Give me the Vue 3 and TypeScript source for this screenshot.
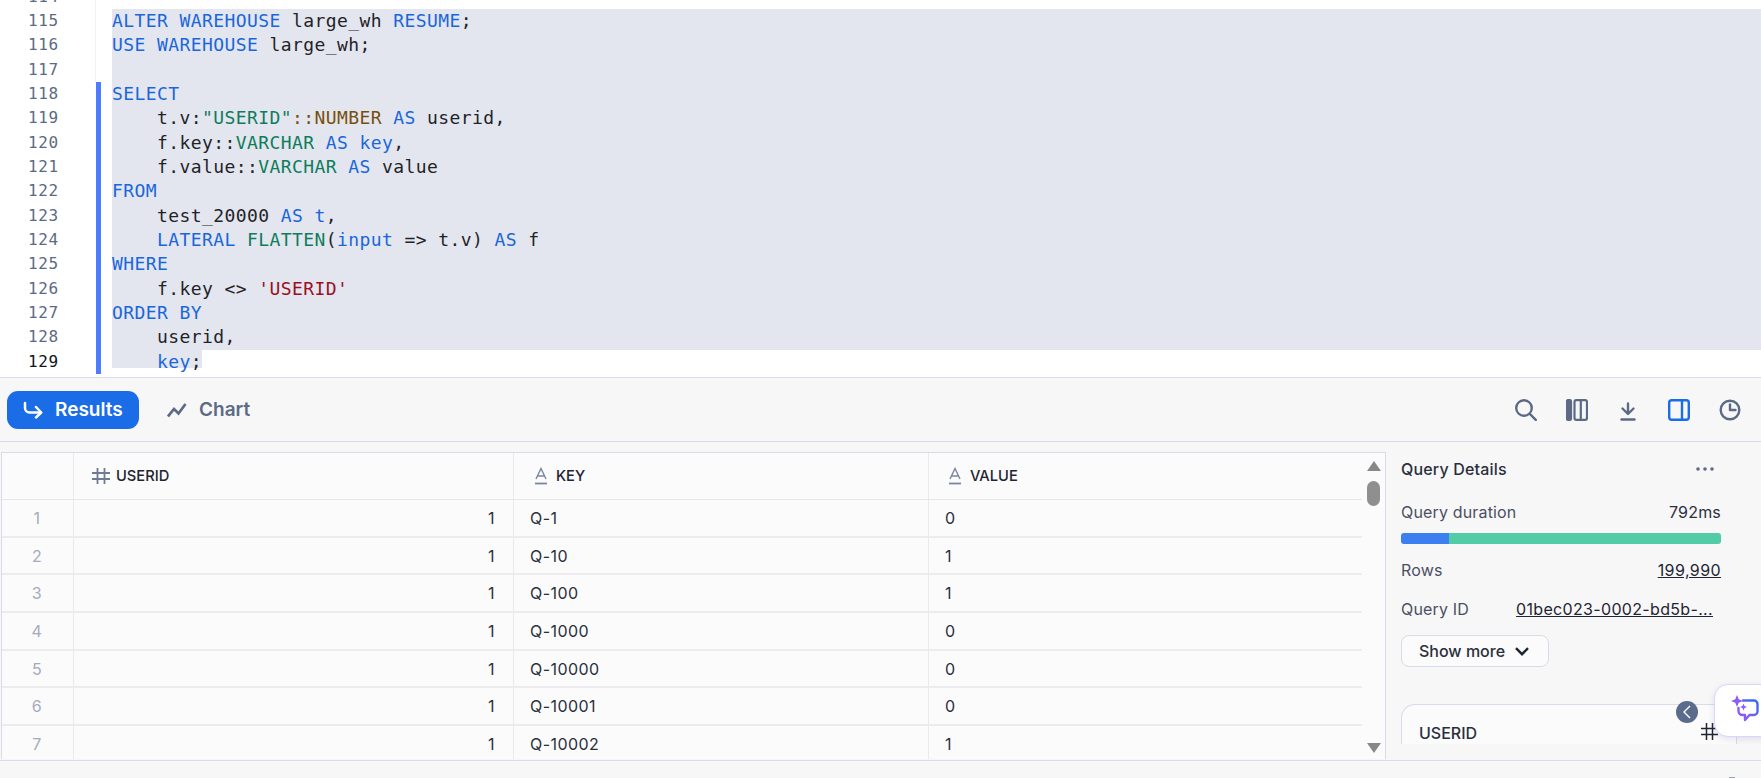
<script setup lang="ts">
type Tok = { t: string; c?: string }
const k = (t: string): Tok => ({ t, c: 'kw' })
const g = (t: string): Tok => ({ t, c: 'fn' })
const p = (t: string): Tok => ({ t })

const lines: { n: number; toks: Tok[] }[] = [
  { n: 114, toks: [] },
  { n: 115, toks: [k('ALTER WAREHOUSE'), p(' large_wh '), k('RESUME'), p(';')] },
  { n: 116, toks: [k('USE WAREHOUSE'), p(' large_wh;')] },
  { n: 117, toks: [] },
  { n: 118, toks: [k('SELECT')] },
  { n: 119, toks: [p('    t.v:'), g('"USERID"'), { t: '::', c: 'op' }, { t: 'NUMBER', c: 'ty' }, p(' '), k('AS'), p(' userid,')] },
  { n: 120, toks: [p('    f.key::'), g('VARCHAR'), p(' '), k('AS'), p(' '), k('key'), p(',')] },
  { n: 121, toks: [p('    f.value::'), g('VARCHAR'), p(' '), k('AS'), p(' value')] },
  { n: 122, toks: [k('FROM')] },
  { n: 123, toks: [p('    test_20000 '), k('AS'), p(' '), k('t'), p(',')] },
  { n: 124, toks: [p('    '), k('LATERAL'), p(' '), g('FLATTEN'), p('('), k('input'), p(' => t.v) '), k('AS'), p(' f')] },
  { n: 125, toks: [k('WHERE')] },
  { n: 126, toks: [p('    f.key <> '), { t: "'USERID'", c: 'str' }] },
  { n: 127, toks: [k('ORDER BY')] },
  { n: 128, toks: [p('    userid,')] },
  { n: 129, toks: [p('    '), k('key'), p(';')] },
]

const rows: [number, string, number][] = [
  [1, 'Q-1', 0],
  [2, 'Q-10', 1],
  [3, 'Q-100', 1],
  [4, 'Q-1000', 0],
  [5, 'Q-10000', 0],
  [6, 'Q-10001', 0],
  [7, 'Q-10002', 1],
]
</script>

<template>
  <div class="page">
    <section class="editor">
      <div class="code">
        <div
          v-for="l in lines"
          :key="l.n"
          class="line"
          :class="{ sel: l.n >= 115 && l.n < 129, last: l.n === 129, changed: l.n >= 118 }"
        >
          <span class="num" :class="{ cur: l.n === 129 }">{{ l.n }}</span>
          <span class="marker"></span>
          <span class="text"><span class="inner"><span v-for="(t, i) in l.toks" :key="i" :class="t.c">{{ t.t }}</span></span></span>
        </div>
      </div>
    </section>

    <div class="toolbar">
      <button class="tab active">
        <svg width="20" height="18" viewBox="0 0 20 18" fill="none" stroke="#fff" stroke-width="2.500" stroke-linecap="round" stroke-linejoin="round"><path d="M2 2v5a4.500 4.500 0 0 0 4.500 4.500H18" /><path d="M13 6l5.200 5.500L13 16.500" /></svg>
        Results
      </button>
      <button class="tab">
        <svg width="20" height="16" viewBox="0 0 20 16" fill="none" stroke="#5d6a85" stroke-width="2.700" stroke-linejoin="miter"><path d="M1 14.500 7 7l4.500 4.500L18.500 2" /></svg>
        Chart
      </button>
      <div class="tools">
        <svg width="22" height="22" viewBox="0 0 22 22" fill="none" stroke="#5d6a85" stroke-width="2.400" stroke-linecap="round"><circle cx="9" cy="9" r="7.800" /><path d="m14.800 14.800 6 6" /></svg>
        <svg width="22" height="22" viewBox="0 0 22 22" fill="none" stroke="#5d6a85" stroke-width="2.200" stroke-linejoin="round"><rect x="1" y="1" width="4" height="20" rx="1.500" fill="#5d6a85" /><rect x="8.500" y="1.200" width="12.500" height="19.600" rx="1.800" /><path d="M14.800 1.200v19.600" /></svg>
        <svg width="22" height="22" viewBox="0 0 22 22" fill="none" stroke="#5d6a85" stroke-width="2.400" stroke-linecap="round" stroke-linejoin="round"><path d="M11 4.500v10M5.500 9.500 11 15l5.500-5.500" /><path d="M4.500 20.500h13" /></svg>
        <svg width="22" height="22" viewBox="0 0 22 22" fill="none" stroke="#1a6ce7" stroke-width="2.400" stroke-linejoin="round"><rect x="1.200" y="1.200" width="19.600" height="19.600" rx="2.500" /><path d="M14 1.200v19.600" /></svg>
        <svg width="22" height="22" viewBox="0 0 22 22" fill="none" stroke="#5d6a85" stroke-width="2.400" stroke-linecap="round" stroke-linejoin="round"><circle cx="11" cy="11" r="9.300" /><path d="M11 5.500V11h5.500" /></svg>
      </div>
    </div>

    <div class="results">
      <div class="table-wrap">
        <div class="grid-scroll">
          <div class="hrow">
            <div class="c c0"></div>
            <div class="c c1 h">
              <svg width="18" height="18" viewBox="0 0 18 18" fill="none" stroke="#6f7a93" stroke-width="1.800"><path d="M5.500 1v16M12.500 1v16M0 6h18M0 12h18" /></svg>
              <span>USERID</span>
            </div>
            <div class="c c2 h">
              <svg class="a" width="14" height="18" viewBox="0 0 14 18" fill="none" stroke="#7a86a0" stroke-width="1.400"><path d="M2 12 7 1.500 12 12M3.500 9h7" /><path d="M1 16.500h12" stroke-width="1.800" /></svg>
              <span>KEY</span>
            </div>
            <div class="c c3 h">
              <svg class="a" width="14" height="18" viewBox="0 0 14 18" fill="none" stroke="#7a86a0" stroke-width="1.400"><path d="M2 12 7 1.500 12 12M3.500 9h7" /><path d="M1 16.500h12" stroke-width="1.800" /></svg>
              <span>VALUE</span>
            </div>
          </div>
          <div v-for="r in rows" :key="r[0]" class="row">
            <div class="c c0 idx">{{ r[0] }}</div>
            <div class="c c1 right">1</div>
            <div class="c c2">{{ r[1] }}</div>
            <div class="c c3">{{ r[2] }}</div>
          </div>
        </div>
        <div class="sbar">
          <span class="arrow up"></span>
          <span class="thumb"></span>
          <span class="arrow down"></span>
        </div>
      </div>

      <aside class="details">
        <div class="d-head">
          <span>Query Details</span>
          <svg width="18" height="4" viewBox="0 0 18 4" fill="#5d6a85"><circle cx="2" cy="2" r="1.800" /><circle cx="9" cy="2" r="1.800" /><circle cx="16" cy="2" r="1.800" /></svg>
        </div>
        <div class="d-row first"><span class="lbl">Query duration</span><span class="val">792ms</span></div>
        <div class="bar"><span class="b1"></span><span class="b2"></span></div>
        <div class="d-row r2"><span class="lbl">Rows</span><a>199,990</a></div>
        <div class="d-row r3"><span class="lbl">Query ID</span><a class="qid">01bec023-0002-bd5b-...</a></div>
        <button class="more">
          Show more
          <svg width="14" height="9" viewBox="0 0 14 9" fill="none" stroke="#1f2433" stroke-width="2.400"><path d="m1 1.200 6 6 6-6" /></svg>
        </button>
        <div class="card">
          <span>USERID</span>
          <svg width="17" height="17" viewBox="0 0 17 17" fill="none" stroke="#1f2433" stroke-width="1.500"><path d="M5.500 0v17M11.500 0v17M0 5.500h17M0 11.500h17" /></svg>
        </div>
      </aside>
    </div>

    <div class="collapse">
      <svg width="10" height="14" viewBox="0 0 10 14" fill="none" stroke="#fff" stroke-width="1.400"><path d="M8 1 2 7l6 6" /></svg>
    </div>
    <div class="assist">
      <svg width="28" height="28" viewBox="0 0 28 28" fill="none">
        <path d="M12 5.500h11a3.500 3.500 0 0 1 3.500 3.500v7.500a3.500 3.500 0 0 1-3.500 3.500h-4.500l-4.500 5v-5h-2.500a4 4 0 0 1-4-4v-3" stroke="url(#ai)" stroke-width="2.400" stroke-linejoin="round" stroke-linecap="round" />
        <path d="M6 0l1.700 4.300L12 6 7.700 7.700 6 12 4.300 7.700 0 6l4.300-1.700Z" fill="#8b5cf6" />
        <path d="M12.500 8.500l1 2.500 2.500 1-2.500 1-1 2.500-1-2.500L9 12l2.500-1Z" fill="#8b5cf6" />
        <defs>
          <linearGradient id="ai" x1="0" y1="1" x2="1" y2="0">
            <stop offset="0" stop-color="#a855f7" />
            <stop offset="1" stop-color="#2f6fed" />
          </linearGradient>
        </defs>
      </svg>
    </div>
    <span class="sliver"></span>
  </div>
</template>

<style>
html, body { margin: 0; background: #f7f7f7; overflow: hidden; }
</style>

<style scoped>
.page {
  position: relative;
  width: 1761px;
  height: 778px;
  overflow: hidden;
  display: flex;
  flex-direction: column;
  font-family: Inter, "Liberation Sans", sans-serif;
  color: #1f2433;
  background: #f7f7f7;
}
.editor {
  height: 377px;
  background: #fff;
  overflow: hidden;
  flex: none;
}
.code { margin-top: -15.3px; }
.line {
  display: flex;
  height: 24.33px;
  line-height: 24.33px;
  font-family: "DejaVu Sans Mono", monospace;
  font-size: 18px;
  letter-spacing: .41px;
  color: #1f2328;
  white-space: pre;
}
.num {
  width: 96px;
  padding-left: 28px;
  box-sizing: border-box;
  flex: none;
  color: #5d6a85;
  font-size: 16px;
  letter-spacing: .6px;
}
.num.cur { color: #11151f; }
.marker {
  width: 5px;
  flex: none;
  margin-right: 11px;
  box-shadow: -1px 0 0 #f1f1f4;
}
.changed .marker { background: #4d7cfe; box-shadow: none; }
.text { flex: 1; min-width: 0; }
.sel .text { background: #e3e6ee; }
.inner { display: inline-block; height: 18px; line-height: 24.33px; }
.last .inner { background: #e3e6ee; }
.kw { color: #1a66db; }
.fn { color: #0f7d5c; }
.ty { color: #76500f; }
.op { color: #76500f; }
.str { color: #9a0f24; }

.toolbar {
  flex: none;
  height: 65px;
  box-sizing: border-box;
  border-top: 1px solid #d9dbe8;
  border-bottom: 1px solid #d9dbe8;
  display: flex;
  align-items: center;
  padding-left: 7px;
  background: #f7f7f7;
}
.tab {
  height: 38px;
  padding: 0 16px;
  display: flex;
  align-items: center;
  gap: 12px;
  border: 0;
  border-radius: 11px;
  background: transparent;
  color: #5d6a85;
  font: 600 19px Inter, sans-serif;
}
.tab.active {
  background: #1a6ce7;
  color: #fff;
  width: 132px;
  margin-right: 12px;
  padding-left: 16px;
  padding-right: 0;
}
.tools {
  margin-left: auto;
  margin-right: 20px;
  display: flex;
  align-items: center;
  gap: 29px;
}

.results {
  flex: 1;
  min-height: 0;
  display: flex;
  padding: 10px 0 0 1px;
  position: relative;
}
.results::after {
  content: "";
  position: absolute;
  left: 0;
  right: 0;
  bottom: 17px;
  height: 1px;
  background: #d9dbe8;
}
.table-wrap {
  width: 1385px;
  height: 307px;
  box-sizing: border-box;
  flex: none;
  display: flex;
  border: 1px solid #d9dbe8;
  border-bottom: 0;
  background: #fbfbfb;
  overflow: hidden;
}
.grid-scroll {
  width: 1360px;
  flex: none;
}
.hrow, .row { display: flex; }
.hrow { height: 47px; border-bottom: 1px solid #e6e6ea; box-sizing: border-box; }
.row { height: 37.700px; border-bottom: 2px solid #ececee; box-sizing: border-box; }
.c {
  box-sizing: border-box;
  display: flex;
  align-items: center;
  border-right: 1px solid #e9e9ee;
  font-size: 16px;
  letter-spacing: .45px;
  color: #2a2f3c;
}
.c0 { width: 72px; }
.c1 { width: 440px; }
.c2 { width: 415px; padding-left: 16px; }
.c3 { flex: 1; padding-left: 16px; border-right: 0; }
.h { font-size: 14.700px; font-weight: 500; color: #1f2433; letter-spacing: 0; }
.c1.h { padding-left: 18px; gap: 6px; }
.c2.h { padding-left: 20px; gap: 8px; }
.c3.h { padding-left: 19px; gap: 8px; }
.idx { justify-content: center; color: #a5abbd; padding-right: 1px; }
.right { justify-content: flex-end; padding-right: 18px; }
.sbar {
  flex: 1;
  position: relative;
}
.arrow {
  position: absolute;
  left: 5px;
  width: 0;
  height: 0;
  border-left: 7px solid transparent;
  border-right: 7px solid transparent;
}
.arrow.up { top: 8px; border-bottom: 10px solid #888; }
.arrow.down { top: 290px; border-top: 10px solid #888; }
.thumb {
  position: absolute;
  left: 5px;
  top: 28px;
  width: 13px;
  height: 25px;
  border-radius: 7px;
  background: #8f8f8f;
}

.details {
  width: 320px;
  margin-left: 15px;
  font-size: 16px;
  color: #2a2f3c;
}
.d-head {
  display: flex;
  justify-content: space-between;
  align-items: center;
  height: 34px;
  font-weight: 450;
  letter-spacing: .17px;
  padding-right: 7px;
}
.d-row { display: flex; justify-content: space-between; align-items: center; height: 24px; }
.first { margin-top: 14px; }
.lbl { color: #4a5063; letter-spacing: .16px; }
.val { letter-spacing: .2px; }
.bar { display: flex; height: 11px; margin-top: 9px; border-radius: 3px; overflow: hidden; }
.b1 { width: 48px; background: #3b7ff0; }
.b2 { flex: 1; background: #52cca6; }
.r2 { margin-top: 14px; }
.r3 { margin-top: 15px; }
.d-row a { text-decoration: underline; color: #1f2433; letter-spacing: .42px; }
.d-row a.qid { margin-right: 8px; letter-spacing: .33px; }
.more {
  margin-top: 14px;
  width: 148px;
  height: 32px;
  display: flex;
  align-items: center;
  padding-left: 17px;
  gap: 10px;
  border: 1px solid #d9dbe8;
  border-radius: 8px;
  background: #fbfbfb;
  font: 500 16px Inter, sans-serif;
  color: #2a2f3c;
  box-sizing: border-box;
}
.card {
  margin-top: 37px;
  height: 40px;
  width: 336px;
  box-sizing: border-box;
  border: 1px solid #d9dbe8;
  border-bottom: 0;
  border-radius: 14px 14px 0 0;
  background: #fbfbfb;
  display: flex;
  justify-content: space-between;
  align-items: flex-start;
  padding: 18px 18px 0 17px;
  overflow: hidden;
  font-weight: 500;
}
.collapse {
  position: absolute;
  left: 1676px;
  top: 701px;
  width: 22px;
  height: 22px;
  border-radius: 50%;
  background: #5b6b8c;
  display: flex;
  align-items: center;
  justify-content: center;
}
.assist {
  position: absolute;
  left: 1714px;
  top: 684px;
  width: 60px;
  height: 53px;
  box-sizing: border-box;
  border: 1px solid #d9d6ff;
  border-radius: 14px;
  background: #fff;
  box-shadow: 0 2px 6px rgba(80, 80, 160, .15);
  padding: 10px 0 0 16px;
}
.assist svg { display: block; }
.sliver {
  position: absolute;
  left: 1729px;
  top: 777px;
  width: 6px;
  height: 1px;
  background: #9a9fae;
}
</style>
